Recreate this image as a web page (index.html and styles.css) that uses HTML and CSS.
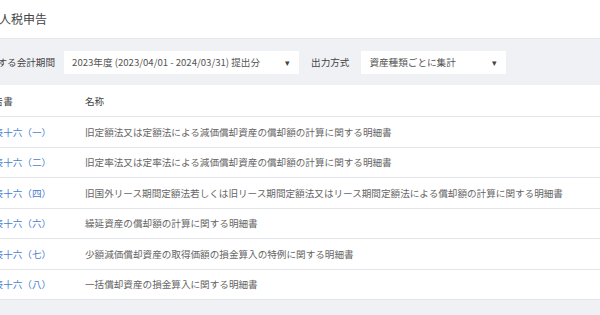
FILE: index.html
```html
<!DOCTYPE html>
<html lang="ja">
<head>
    <meta charset="UTF-8">
    <meta name="viewport" content="width=device-width, initial-scale=1.0">
    <title>法人税申告</title>
    <link rel="stylesheet" href="styles.css">
</head>
<body>
    <div class="page">
        <div class="title-bar">
            <h1>法人税申告</h1>
        </div>

        <div class="filter-bar">
            <span class="filter-label">対象とする会計期間</span>
            <div class="select period">
                <span>2023年度 (2023/04/01 - 2024/03/31) 提出分</span>
                <span class="arrow">▾</span>
            </div>
            <span class="filter-label second">出力方式</span>
            <div class="select method">
                <span>資産種類ごとに集計</span>
                <span class="arrow">▾</span>
            </div>
        </div>

        <table class="forms">
            <thead>
                <tr>
                    <th class="col-code">申告書</th>
                    <th>名称</th>
                </tr>
            </thead>
            <tbody>
                <tr>
                    <td class="col-code"><a href="#">別表十六（一）</a></td>
                    <td>旧定額法又は定額法による減価償却資産の償却額の計算に関する明細書</td>
                </tr>
                <tr>
                    <td class="col-code"><a href="#">別表十六（二）</a></td>
                    <td>旧定率法又は定率法による減価償却資産の償却額の計算に関する明細書</td>
                </tr>
                <tr>
                    <td class="col-code"><a href="#">別表十六（四）</a></td>
                    <td>旧国外リース期間定額法若しくは旧リース期間定額法又はリース期間定額法による償却額の計算に関する明細書</td>
                </tr>
                <tr>
                    <td class="col-code"><a href="#">別表十六（六）</a></td>
                    <td>繰延資産の償却額の計算に関する明細書</td>
                </tr>
                <tr>
                    <td class="col-code"><a href="#">別表十六（七）</a></td>
                    <td>少額減価償却資産の取得価額の損金算入の特例に関する明細書</td>
                </tr>
                <tr>
                    <td class="col-code"><a href="#">別表十六（八）</a></td>
                    <td>一括償却資産の損金算入に関する明細書</td>
                </tr>
            </tbody>
        </table>
    </div>
</body>
</html>
```

FILE: styles.css
```css
body {
    font-family: "Noto Sans CJK JP", "Noto Sans", sans-serif;
    background-color: #f0f1f5;
    margin: 0;
    padding: 0;
    overflow: hidden;
}
.page {
    margin-left: -40px; /* la vista está desplazada a la izquierda */
}
.title-bar {
    background-color: #fff;
    height: 38px;
    border-bottom: 1px solid #e6e7ec;
    padding-left: 27px;
}
.title-bar h1 {
    margin: 0;
    font-size: 12px;
    font-weight: normal;
    line-height: 38px;
    color: #444;
}
.filter-bar {
    display: flex;
    align-items: center;
    height: 46px;
    padding-left: 9px;
    font-size: 9.6px;
}
.filter-label {
    color: #444;
    margin-right: 9px;
}
.filter-label.second {
    margin-left: 12px;
    margin-right: 12px;
}
.select {
    display: flex;
    align-items: center;
    justify-content: space-between;
    background-color: #fff;
    height: 23px;
    padding: 0 9px 0 8px;
    box-sizing: border-box;
    color: #555;
}
.select.period {
    width: 235px;
}
.select.method {
    width: 145px;
}
.arrow {
    font-size: 9px;
    color: #444;
}
.forms {
    width: 100%;
    border-collapse: collapse;
    background-color: #fff;
    font-size: 9.6px;
}
.forms th {
    text-align: left;
    font-weight: normal;
    color: #444;
    height: 31px;
    padding: 0;
    border-bottom: 1px solid #e4e5ea;
}
.forms td {
    height: 29.5px;
    padding: 0;
    color: #666;
    border-bottom: 1px solid #e4e5ea;
    white-space: nowrap;
}
.forms .col-code {
    width: 101px;
    padding-left: 24px;
}
.forms a {
    color: #4a80d0;
    text-decoration: none;
}
```
